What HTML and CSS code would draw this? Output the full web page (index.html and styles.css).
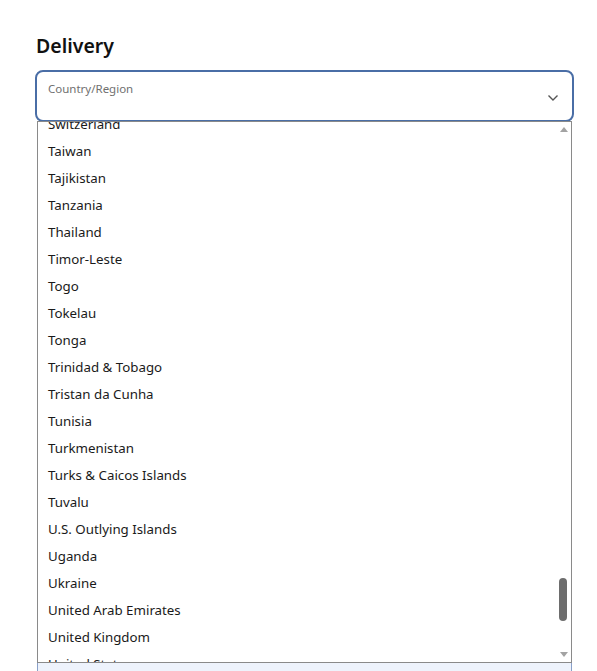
FILE: index.html
```html
<!DOCTYPE html>
<html lang="en">
<head>
<meta charset="utf-8">
<title>Delivery</title>
<link rel="stylesheet" href="styles.css">
</head>
<body>
<main class="page">
  <h2 class="title">Delivery</h2>
  <div class="field">
    <div class="select">
      <span class="select-label">Country/Region</span>
      <svg class="chevron" width="12" height="8" viewBox="0 0 12 8"><path d="M1.5 1.5 L6 6 L10.5 1.5" fill="none" stroke="#555" stroke-width="1.4"/></svg>
    </div>
    <div class="listbox">
      <ul class="options">
        <li>Switzerland</li>
        <li>Taiwan</li>
        <li>Tajikistan</li>
        <li>Tanzania</li>
        <li>Thailand</li>
        <li>Timor-Leste</li>
        <li>Togo</li>
        <li>Tokelau</li>
        <li>Tonga</li>
        <li>Trinidad &amp; Tobago</li>
        <li>Tristan da Cunha</li>
        <li>Tunisia</li>
        <li>Turkmenistan</li>
        <li>Turks &amp; Caicos Islands</li>
        <li>Tuvalu</li>
        <li>U.S. Outlying Islands</li>
        <li>Uganda</li>
        <li>Ukraine</li>
        <li>United Arab Emirates</li>
        <li>United Kingdom</li>
        <li>United States</li>
      </ul>
      <div class="scrollbar">
        <span class="arrow up"></span>
        <span class="thumb"></span>
        <span class="arrow down"></span>
      </div>
    </div>
    <div class="next-field"></div>
  </div>
</main>
</body>
</html>
```
FILE: styles.css
```css
* { box-sizing: border-box; }
html, body { margin: 0; padding: 0; background: #fff; }
body { font-family: "Noto Sans", "Open Sans", sans-serif; color: #1a1a1a; }
.page { padding: 32px 23px 0 35px; height: 671px; overflow: hidden; }
.title { margin: 0 0 10px 1px; font-size: 19.5px; font-weight: 600; line-height: 28px; color: #111; }
.field { display: flex; flex-direction: column; }
.select {
  position: relative;
  height: 52px;
  border: 2px solid #4a6ea6;
  border-radius: 8px;
  padding: 4px 11px;
}
.select-label { font-size: 11.5px; color: #707070; line-height: 16px; }
.chevron { position: absolute; right: 13px; top: 22px; }
.listbox {
  position: relative;
  margin: -1px 2px 0 2px;
  height: 542px;
  border: 1px solid #8a8a8a;
  overflow: hidden;
}
.options {
  list-style: none;
  margin: -11px 0 0 0;
  padding: 0;
}
.options li {
  height: 27px;
  line-height: 27px;
  padding-left: 10px;
  font-size: 13.3px;
  color: #1a1a1a;
  white-space: nowrap;
}
.scrollbar {
  position: absolute;
  right: 0; top: 0; bottom: 0;
  width: 14px;
  background: #fff;
}
.arrow {
  position: absolute;
  left: 3px;
  width: 0; height: 0;
  border-left: 4px solid transparent;
  border-right: 4px solid transparent;
}
.arrow.up { top: 5px; border-bottom: 5px solid #a3a3a3; }
.arrow.down { bottom: 5px; border-top: 5px solid #a3a3a3; }
.thumb {
  position: absolute;
  left: 2px;
  top: 456px;
  width: 8px;
  height: 43px;
  border-radius: 4px;
  background: #6d6d6d;
}
.next-field {
  height: 20px;
  margin: 0 2px;
  background: #eef3fc;
  border-left: 1px solid #8aa0c8;
  border-right: 1px solid #8aa0c8;
}
```
